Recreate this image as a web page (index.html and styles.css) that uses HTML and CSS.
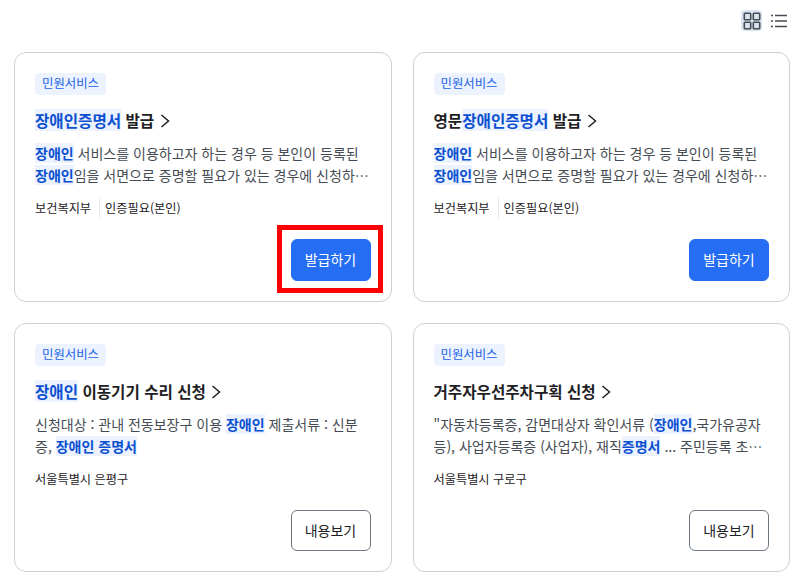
FILE: index.html
```html
<!DOCTYPE html>
<html lang="ko">
<head>
  <meta charset="UTF-8" />
  <title>민원서비스 검색 결과</title>
  <link rel="stylesheet" href="styles.css">
</head>
<body>
  <div class="toolbar">
    <button class="view-btn active" aria-label="카드형">
      <svg width="18" height="18" viewBox="0 0 18 18" fill="none" stroke="#464c53" stroke-width="1.6">
        <rect x="1.3" y="1.3" width="6.4" height="6.4" rx="0.8"/>
        <rect x="10.3" y="1.3" width="6.4" height="6.4" rx="0.8"/>
        <rect x="1.3" y="10.3" width="6.4" height="6.4" rx="0.8"/>
        <rect x="10.3" y="10.3" width="6.4" height="6.4" rx="0.8"/>
      </svg>
    </button>
    <button class="view-btn" aria-label="목록형">
      <svg width="18" height="18" viewBox="0 0 18 18" fill="none" stroke="#464c53" stroke-width="1.3">
        <path d="M1 3.5h2M5 3.5h12M1 9h2M5 9h12M1 14.5h2M5 14.5h12"/>
      </svg>
    </button>
  </div>

  <div class="card-grid">
    <div class="card">
      <span class="tag">민원서비스</span>
      <h3 class="card-title"><mark>장애인증명서</mark> 발급 <svg class="chevron" width="10" height="14" viewBox="0 0 10 14" fill="none" stroke="#1e2124" stroke-width="1.5"><path d="M1.5 1 8.5 7l-7 6"/></svg></h3>
      <p class="desc"><mark>장애인</mark> 서비스를 이용하고자 하는 경우 등 본인이 등록된 <mark>장애인</mark>임을 서면으로 증명할 필요가 있는 경우에 신청하는 민원입니다 자세한 내용은 안내를 확인</p>
      <div class="meta"><span>보건복지부</span><span class="meta-sep">인증필요(본인)</span></div>
      <div class="card-foot">
        <a href="#" class="btn btn-primary">발급하기</a>
        <div class="highlight-box"></div>
      </div>
    </div>

    <div class="card">
      <span class="tag">민원서비스</span>
      <h3 class="card-title">영문<mark>장애인증명서</mark> 발급 <svg class="chevron" width="10" height="14" viewBox="0 0 10 14" fill="none" stroke="#1e2124" stroke-width="1.5"><path d="M1.5 1 8.5 7l-7 6"/></svg></h3>
      <p class="desc"><mark>장애인</mark> 서비스를 이용하고자 하는 경우 등 본인이 등록된 <mark>장애인</mark>임을 서면으로 증명할 필요가 있는 경우에 신청하는 민원입니다 자세한 내용은 안내를 확인</p>
      <div class="meta"><span>보건복지부</span><span class="meta-sep">인증필요(본인)</span></div>
      <div class="card-foot">
        <a href="#" class="btn btn-primary">발급하기</a>
      </div>
    </div>

    <div class="card">
      <span class="tag">민원서비스</span>
      <h3 class="card-title"><mark>장애인</mark> 이동기기 수리 신청 <svg class="chevron" width="10" height="14" viewBox="0 0 10 14" fill="none" stroke="#1e2124" stroke-width="1.5"><path d="M1.5 1 8.5 7l-7 6"/></svg></h3>
      <p class="desc">신청대상 : 관내 전동보장구 이용 <mark>장애인</mark> 제출서류 : 신분증, <mark>장애인 증명서</mark></p>
      <div class="meta"><span>서울특별시 은평구</span></div>
      <div class="card-foot">
        <a href="#" class="btn btn-outline">내용보기</a>
      </div>
    </div>

    <div class="card">
      <span class="tag">민원서비스</span>
      <h3 class="card-title">거주자우선주차구획 신청 <svg class="chevron" width="10" height="14" viewBox="0 0 10 14" fill="none" stroke="#1e2124" stroke-width="1.5"><path d="M1.5 1 8.5 7l-7 6"/></svg></h3>
      <p class="desc">"자동차등록증, 감면대상자 확인서류 (<mark>장애인</mark>,국가유공자 등), 사업자등록증 (사업자), 재직<mark>증명서</mark> ... 주민등록 초본 등 거주 사실을 확인할 수 있는 서류</p>
      <div class="meta"><span>서울특별시 구로구</span></div>
      <div class="card-foot">
        <a href="#" class="btn btn-outline">내용보기</a>
      </div>
    </div>
  </div>
</body>
</html>
```

FILE: styles.css
```css
* {
  box-sizing: border-box;
}
body {
  margin: 0;
  padding: 0 10px 0 14px;
  background-color: #fff;
  font-family: "Noto Sans CJK KR", "Noto Sans", sans-serif;
  color: #1e2124;
}
.toolbar {
  height: 52px;
  display: flex;
  justify-content: flex-end;
  align-items: flex-start;
  padding: 10px 1px 0 0;
}
.view-btn {
  width: 21px;
  height: 21px;
  padding: 0;
  margin-left: 6px;
  border: none;
  border-radius: 4px;
  background: none;
  display: flex;
  align-items: center;
  justify-content: center;
}
.view-btn.active {
  background-color: #d9e4f0;
}
.card-grid {
  display: grid;
  grid-template-columns: 377.5px 377.5px;
  grid-auto-rows: 249.5px;
  gap: 21px;
}
.card {
  border: 1px solid #cdd1d5;
  border-radius: 12px;
  padding: 20px;
  display: flex;
  flex-direction: column;
  align-items: flex-start;
}
.tag {
  height: 22px;
  padding: 0 7px;
  border-radius: 4px;
  background-color: #ecf2fe;
  color: #1a62e8;
  font-size: 12.4px;
  line-height: 21px;
}
.card-title {
  margin: 13px 0 0;
  font-size: 15.6px;
  line-height: 24px;
  font-weight: 700;
  color: #1e2124;
}
.chevron {
  margin-left: 1px;
  vertical-align: -1px;
}
mark {
  background-color: #ecf2fe;
  color: #0b50d0;
  font-weight: 700;
}
.desc {
  margin: 10px 0 0;
  font-size: 14px;
  line-height: 22px;
  color: #464c53;
  display: -webkit-box;
  -webkit-box-orient: vertical;
  -webkit-line-clamp: 2;
  overflow: hidden;
}
.meta {
  margin-top: 12px;
  font-size: 12.2px;
  line-height: 20px;
  color: #1e2124;
  display: flex;
}
.meta-sep {
  margin-left: 8px;
  padding-left: 5px;
  border-left: 1px solid #e6e8ea;
}
.card-foot {
  margin-top: auto;
  align-self: flex-end;
  position: relative;
}
.btn {
  display: block;
  width: 80px;
  height: 41.5px;
  border-radius: 6px;
  font-size: 14px;
  line-height: 39.5px;
  text-align: center;
  text-decoration: none;
}
.btn-primary {
  background-color: #256ef4;
  border: 1px solid #256ef4;
  color: #fff;
}
.btn-outline {
  background-color: #fff;
  border: 1px solid #6d7882;
  color: #1e2124;
}
.highlight-box {
  position: absolute;
  left: -13.5px;
  top: -14px;
  width: 106px;
  height: 67.5px;
  border: 5px solid #f00;
}
```
